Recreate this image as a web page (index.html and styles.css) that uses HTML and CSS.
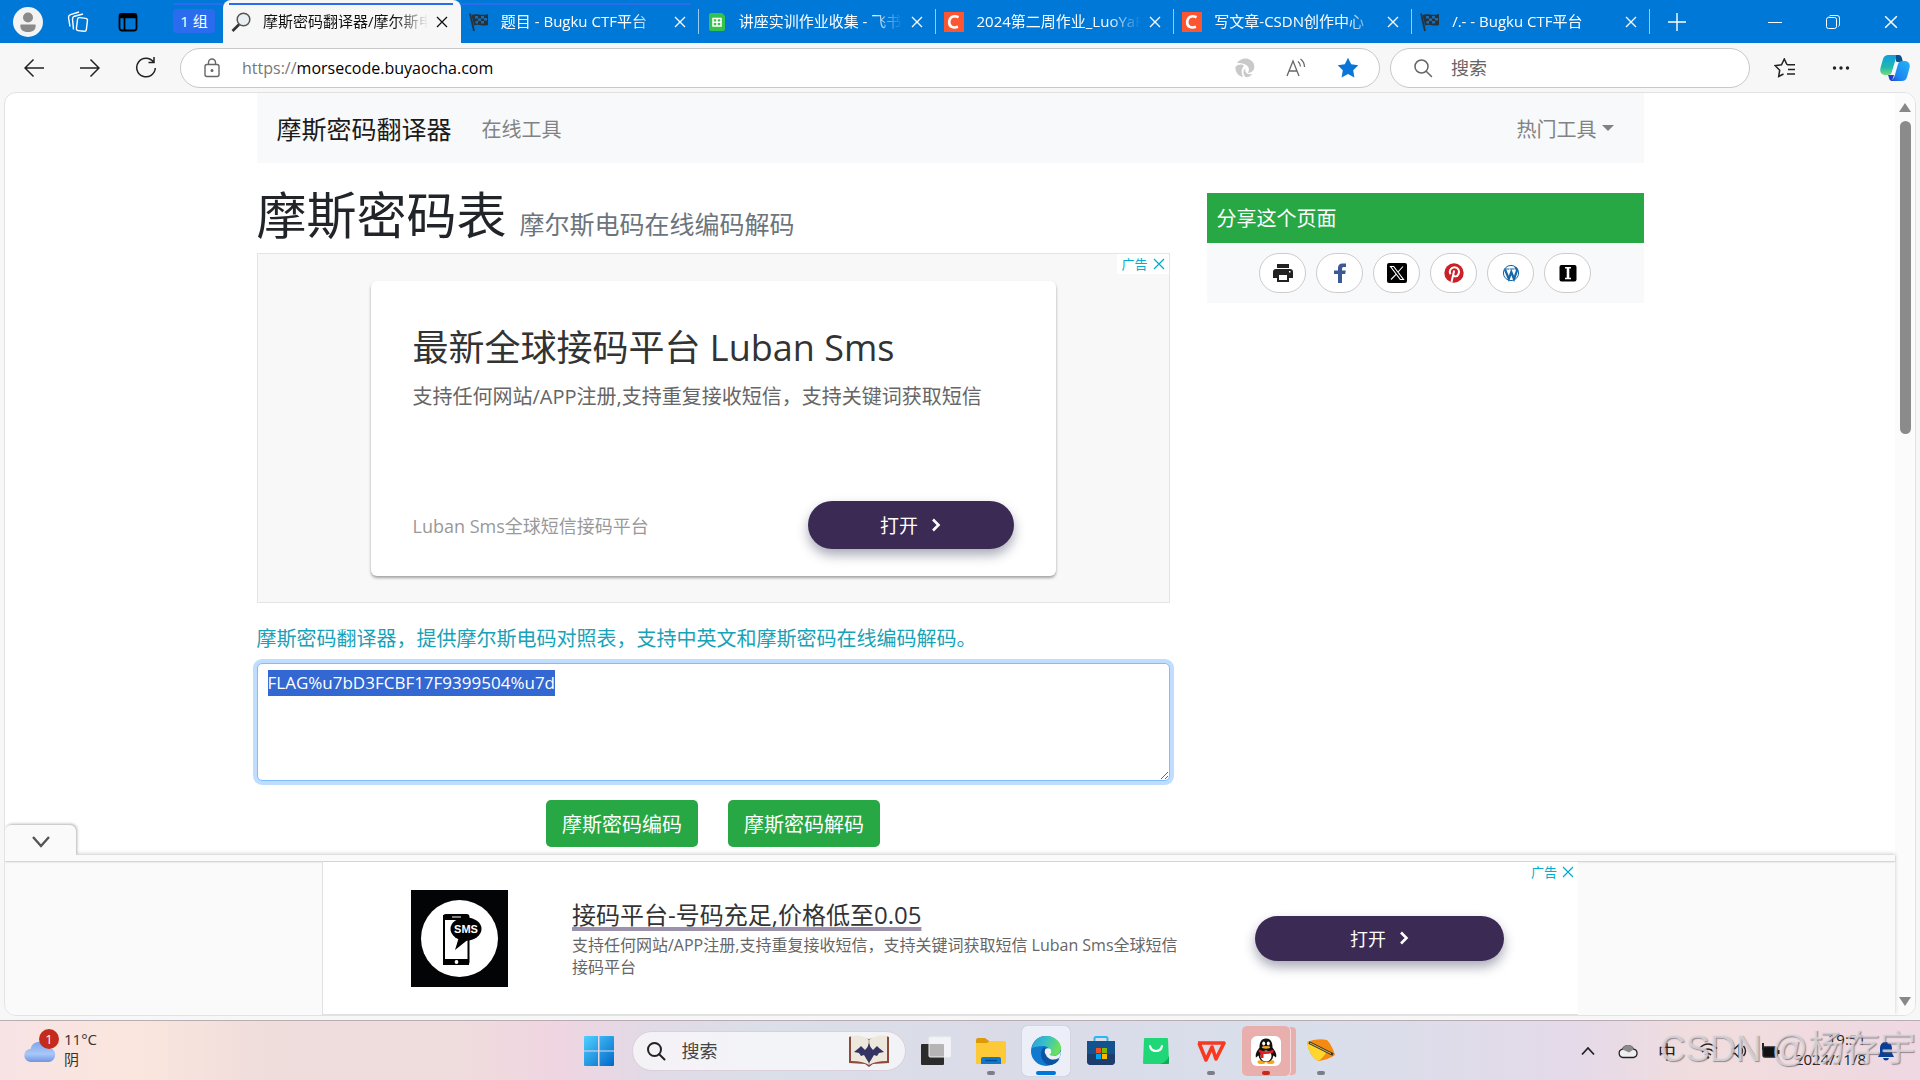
FILE: index.html
```html
<!DOCTYPE html>
<html lang="zh-CN">
<head>
    <meta charset="UTF-8">
    <meta name="viewport" content="width=device-width, initial-scale=1.0">
    <title>摩斯密码翻译器</title>
    <link rel="stylesheet" href="styles.css">
</head>
<body>
    <svg class="defs" aria-hidden="true">
        <defs>
            <symbol id="close" viewBox="0 0 12 12"><path d="M1 1l10 10M11 1L1 11" fill="none" stroke="currentColor" stroke-width="1.3"/></symbol>
            <symbol id="flag" viewBox="0 0 20 20">
                <path d="M1 1.500L5 19" stroke="#26323c" stroke-width="1.800"/>
                <path d="M2.500 3c5-2.500 9 1.500 16.500-1v11c-6 2-9-2-14 .5z" fill="#26323c"/>
                <path d="M6 4h3v2.500H6zM12 4h3v2.500h-3zM9 6.500h3V9H9zM15 6h3v2.500h-3zM6.500 9H9v2.500H6.500zM12 9h3v2.500h-3z" fill="#1c6db0"/>
            </symbol>
            <symbol id="csdn" viewBox="0 0 20 20"><path d="M0 0h20v20H0z" fill="#fc5531"/><path d="M14.500 5.200C9.500 3 5.500 5 5.200 10c-.2 5 4 6.500 8.800 4.800" fill="none" stroke="#fff" stroke-width="2.600"/></symbol>
            <symbol id="loupe" viewBox="0 0 20 20"><circle cx="8.500" cy="8.500" r="6.500" fill="none" stroke="currentColor"/><path d="M13.200 13.200l5.300 5.300" stroke="currentColor" stroke-linecap="round"/></symbol>
            <symbol id="chevron" viewBox="0 0 10 14"><path d="M2 1.500L7.500 7 2 12.500" fill="none" stroke="#fff" stroke-width="2.600"/></symbol>
        </defs>
    </svg>

    <header class="tabbar">
        <div class="tab-tools">
            <button class="tool" aria-label="个人资料"><svg width="30" height="30" viewBox="0 0 30 30"><circle cx="15" cy="15" r="15" fill="#f3f3f3"/><circle cx="15" cy="10.500" r="5" fill="#8a8a8a"/><path d="M7.500 17.500h15c1 5-2.500 7.500-7.500 7.500s-8.500-2.500-7.500-7.500z" fill="#8a8a8a"/></svg></button>
            <button class="tool" aria-label="工作区"><svg width="24" height="24" viewBox="0 0 24 24" fill="none" stroke="#fff" stroke-width="1.400"><rect x="11" y="8" width="10" height="13" rx="2" transform="rotate(7 16 14)"/><path d="M7.500 19.500L6.500 9q0-2 2-2.800L17 4M4 16.500L2.500 7.500q0-2 2-2.800L13 2"/></svg></button>
            <button class="tool" aria-label="标签页"><svg width="20" height="20" viewBox="0 0 20 20" fill="none" stroke="#000" stroke-width="1.800"><rect x="1.500" y="2" width="17" height="16.500" rx="2.500"/><path d="M6.500 6v12"/><path d="M1.500 4h17" stroke-width="4.500"/></svg></button>
        </div>
        <div class="tab-group"><button class="group-name">1 组</button></div>
        <div class="tabs">
            <div class="tab grouped active">
                <svg class="favicon" viewBox="0 0 20 20"><circle cx="12.500" cy="7.500" r="6.300" fill="#e9eff2" stroke="#555" stroke-width="1.500"/><path d="M8 12.500L1.500 19" stroke="#333" stroke-width="2.600"/></svg>
                <span class="tab-title">摩斯密码翻译器/摩尔斯电</span>
                <button class="tab-close" aria-label="关闭"><svg><use href="#close"/></svg></button>
            </div>
            <div class="tab grouped">
                <svg class="favicon"><use href="#flag"/></svg>
                <span class="tab-title">题目 - Bugku CTF平台</span>
                <button class="tab-close" aria-label="关闭"><svg><use href="#close"/></svg></button>
            </div>
            <div class="tab">
                <svg class="favicon" viewBox="0 0 20 20"><path d="M2 3q0-2 2-2h11l3 3v13q0 2-2 2H4q-2 0-2-2z" fill="#34c24c"/><path d="M6 6.500h8v7.500H6zM10 6.500V14M6 10.200h8" fill="none" stroke="#fff" stroke-width="1.500"/></svg>
                <span class="tab-title">讲座实训作业收集 - 飞书</span>
                <button class="tab-close" aria-label="关闭"><svg><use href="#close"/></svg></button>
            </div>
            <div class="tab">
                <svg class="favicon"><use href="#csdn"/></svg>
                <span class="tab-title">2024第二周作业_LuoYaF</span>
                <button class="tab-close" aria-label="关闭"><svg><use href="#close"/></svg></button>
            </div>
            <div class="tab">
                <svg class="favicon"><use href="#csdn"/></svg>
                <span class="tab-title">写文章-CSDN创作中心</span>
                <button class="tab-close" aria-label="关闭"><svg><use href="#close"/></svg></button>
            </div>
            <div class="tab">
                <svg class="favicon"><use href="#flag"/></svg>
                <span class="tab-title">/.- - Bugku CTF平台</span>
                <button class="tab-close" aria-label="关闭"><svg><use href="#close"/></svg></button>
            </div>
        </div>
        <button class="new-tab" aria-label="新建标签页"><svg width="18" height="18" viewBox="0 0 18 18"><path d="M9 0v18M0 9h18" stroke="#fff" stroke-width="1.400"/></svg></button>
        <div class="window-buttons">
            <button aria-label="最小化"><svg width="14" height="14" viewBox="0 0 14 14"><path d="M0 7.500h14" stroke="#fff"/></svg></button>
            <button aria-label="还原"><svg width="14" height="14" viewBox="0 0 14 14" fill="none" stroke="#fff"><rect x=".5" y="2.500" width="10" height="11" rx="2"/><path d="M3 1.500q.5-1 2-1h6q2.500 0 2.500 2.500v6q0 2-1 2.500"/></svg></button>
            <button aria-label="关闭窗口"><svg width="14" height="14"><use href="#close"/></svg></button>
        </div>
    </header>

    <div class="toolbar">
        <button class="nav-btn" aria-label="后退"><svg width="20" height="20" viewBox="0 0 20 20"><path d="M20 10H1M9.500 1.500L1 10l8.500 8.500"/></svg></button>
        <button class="nav-btn" aria-label="前进"><svg width="20" height="20" viewBox="0 0 20 20"><path d="M0 10h19M10.500 1.500L19 10l-8.500 8.500"/></svg></button>
        <button class="nav-btn" aria-label="刷新"><svg width="22" height="22" viewBox="0 0 22 22"><path d="M18.500 5A9.300 9.300 0 1 0 20.300 11M19 0v5.500h-5.500"/></svg></button>
        <div class="address">
            <svg width="18" height="20" viewBox="0 0 18 20" fill="none" stroke="#666" stroke-width="1.400"><rect x="2" y="6.500" width="14" height="12" rx="2"/><path d="M5.500 6.500V4.500a3.500 3.500 0 0 1 7 0v2"/><circle cx="9" cy="12.500" r=".8" fill="#444"/></svg>
            <p class="url"><span>https://</span>morsecode.buyaocha.com</p>
            <button aria-label="扩展"><svg width="20" height="20" viewBox="0 0 20 20" fill="#c9c9c9"><path d="M2 5C6-1 15-1 18.500 5c2.500 6-1 9.500-5.500 10 1.500-3 1-5.500-.5-7S7 4.500 2 5zM.5 9C3 6 7 6 9 8c-3 3-3 7-1 11-5-1-8-5-7.500-10zM10.500 10c-1.500 5 2.500 7 7 6-2 2.500-4.500 3.500-7 3-3-3-2.500-7 0-9z"/></svg></button>
            <button aria-label="大声朗读"><svg width="20" height="20" viewBox="0 0 20 20" fill="none" stroke="#666" stroke-width="1.300"><path d="M1 18L7 3l6 15M3 13h8M12 3.500q2.500 2 2.500 5M14.500 1q4 3 4 8"/></svg></button>
            <button aria-label="收藏"><svg width="22" height="22" viewBox="0 0 22 22"><path d="M11 .8l3.200 6.500 7.100 1-5.100 5 1.200 7.200-6.400-3.400-6.400 3.400 1.200-7.200-5.100-5 7.100-1z" fill="#0a75d8"/></svg></button>
        </div>
        <label class="side-search">
            <svg class="loupe" width="20" height="20"><use href="#loupe"/></svg>
            <input type="text" placeholder="搜索" aria-label="搜索">
        </label>
        <div class="toolbar-end">
            <button class="nav-btn" aria-label="收藏夹"><svg width="22" height="20" viewBox="0 0 22 20"><path d="M13 6.800L10.300 1 7.500 6.800l-6.300.9 4.500 4.500-1 6.300 4.800-2.500M13 6.800h8M14 11.500h7M13 16h8"/></svg></button>
            <button class="nav-btn" aria-label="更多"><svg width="18" height="6" viewBox="0 0 18 6" class="dots"><circle cx="2.500" cy="3" r="1.700"/><circle cx="9" cy="3" r="1.700"/><circle cx="15.500" cy="3" r="1.700"/></svg></button>
            <button class="copilot" aria-label="Copilot"><svg width="30" height="28" viewBox="0 0 30 28">
                <defs>
                    <linearGradient id="cp1" x1="0" y1="0" x2="0" y2="1"><stop offset="0" stop-color="#0e9ee0"/><stop offset=".6" stop-color="#1fb8ae"/><stop offset="1" stop-color="#6fdc7c"/></linearGradient>
                    <linearGradient id="cp2" x1="1" y1="0" x2="0" y2="1"><stop offset="0" stop-color="#25b5f5"/><stop offset=".7" stop-color="#1a86f0"/><stop offset="1" stop-color="#2a3fd0"/></linearGradient>
                </defs>
                <path d="M8 1h11c-3 2-4 6-5 10l-2 7c-1 3-3 3-6 3-5 0-7-3-5-9l2-7c1-3 3-4 5-4z" fill="url(#cp1)"/>
                <path d="M16 1h3c3 0 3 4 4 7h-7z" fill="#0b4f8c"/>
                <path d="M22 27H11c3-2 4-6 5-10l2-7c1-3 3-3 6-3 5 0 7 3 5 9l-2 7c-1 3-3 4-5 4z" fill="url(#cp2)"/>
                <path d="M8 21h6l-2 6c-3 0-3-4-4-6z" fill="#1d3fcf"/>
                <path d="M17.500 8.500q-1.500 1-2 3l-2.500 8" fill="none" stroke="#f2fafd" stroke-width="3"/>
            </svg></button>
        </div>
    </div>

    <div class="viewport">
        <div class="page">
            <div class="scroll-area">
                <div class="container">
                    <nav class="navbar">
                        <a class="brand" href="#">摩斯密码翻译器</a>
                        <a class="nav-link" href="#">在线工具</a>
                        <a class="nav-link dropdown" href="#">热门工具</a>
                    </nav>
                    <div class="row">
                        <main>
                            <h1>摩斯密码表 <small>摩尔斯电码在线编码解码</small></h1>
                            <div class="ad">
                                <p class="ad-label">广告 <svg width="12" height="12"><use href="#close"/></svg></p>
                                <div class="ad-card">
                                    <h2>最新全球接码平台 Luban Sms</h2>
                                    <p class="ad-desc">支持任何网站/APP注册,支持重复接收短信，支持关键词获取短信</p>
                                    <div class="ad-foot">
                                        <span>Luban Sms全球短信接码平台</span>
                                        <a class="open-btn" href="#">打开 <svg width="10" height="14"><use href="#chevron"/></svg></a>
                                    </div>
                                </div>
                            </div>
                            <label class="intro" for="content">摩斯密码翻译器，提供摩尔斯电码对照表，支持中英文和摩斯密码在线编码解码。</label>
                            <textarea id="content" spellcheck="false">FLAG%u7bD3FCBF17F9399504%u7d</textarea>
                            <div class="actions">
                                <button class="btn">摩斯密码编码</button>
                                <button class="btn">摩斯密码解码</button>
                            </div>
                        </main>
                        <aside>
                            <h3>分享这个页面</h3>
                            <div class="share">
                                <a href="#" aria-label="打印"><svg viewBox="0 0 20 20" fill="#222"><path d="M4 1h12v4H4zM3 6h14q3 0 3 3v6h-4v4H4v-4H0V9q0-3 3-3z"/><path d="M6 12h8v5H6zM16 8h1.500v1.500H16z" fill="#fff"/></svg></a>
                                <a href="#" aria-label="Facebook"><svg viewBox="0 0 20 20"><path d="M8 20v-9H4V7.500h4V5q0-4.500 4.500-4.500H16V4h-2.500Q12 4 12 5.500v2h3.800l-.6 3.500H12v9z" fill="#3b5998"/></svg></a>
                                <a href="#" aria-label="X"><svg viewBox="0 0 20 20"><rect width="20" height="20" rx="2"/><path d="M3.500 3.500h3.200l9.800 13h-3.200zM16 3.500L11 9M9 11.300L4 16.500" fill="none" stroke="#fff" stroke-width="1.100"/></svg></a>
                                <a href="#" aria-label="Pinterest"><svg viewBox="0 0 20 20"><circle cx="10" cy="10" r="9.700" fill="#cb2027"/><path d="M6.500 11.200C4.500 8 7 4.300 10.500 4.300c4 0 5.300 3.500 4 6.700-1.200 3-4.500 3-5 1M10.200 7.500L7.500 19" fill="none" stroke="#fff" stroke-width="2"/></svg></a>
                                <a href="#" aria-label="WordPress"><svg viewBox="0 0 20 20"><circle cx="10" cy="10" r="7.600" fill="#fff" stroke="#1468a8" stroke-width="1"/><path d="M4 6.500l3.800 9.500 2.500-7L13 16l3-8.500c0-2-1.500-2-1.500-3.500" fill="none" stroke="#1468a8" stroke-width="2.200"/><path d="M3.500 6h5M9 6h4.500" stroke="#1468a8" stroke-width="1.200"/></svg></a>
                                <a href="#" aria-label="Instapaper"><svg viewBox="0 0 20 20"><rect x="1.500" y="2" width="17" height="16.500" rx="2"/><path d="M7 4.800h6M7 15.500h6" stroke="#fff" stroke-width="1.400"/><path d="M10 5v10" stroke="#fff" stroke-width="2.600"/></svg></a>
                            </div>
                        </aside>
                    </div>
                </div>
            </div>
            <div class="anchor">
                <button class="anchor-toggle" aria-label="收起"><svg width="18" height="12" viewBox="0 0 18 12"><path d="M1 1l8 9 8-9" fill="none" stroke="#555" stroke-width="2.400"/></svg></button>
                <div class="anchor-ad">
                    <p class="ad-label">广告 <svg width="12" height="12"><use href="#close"/></svg></p>
                    <svg class="sms" viewBox="0 0 97 97">
                        <path d="M0 0h97v97H0z" fill="#030405"/>
                        <circle cx="48.500" cy="48.500" r="38.500" fill="#fff"/>
                        <rect x="33" y="25" width="24.500" height="49" rx="2" fill="#fff" stroke="#000" stroke-width="2"/>
                        <path d="M32 25h26v5H32zM32 69h26v6H32z"/><path d="M41 27h9" stroke="#fff"/><circle cx="45.500" cy="72" r="1.900" fill="#fff"/>
                        <ellipse cx="55" cy="39" rx="15.500" ry="11.500"/><path d="M48 47l-4 13 15-12z"/>
                        <text x="55" y="43">SMS</text>
                    </svg>
                    <div class="anchor-text">
                        <h2><a href="#">接码平台-号码充足,价格低至0.05</a></h2>
                        <p>支持任何网站/APP注册,支持重复接收短信，支持关键词获取短信 Luban Sms全球短信接码平台</p>
                    </div>
                    <a class="open-btn wide" href="#">打开 <svg width="10" height="14"><use href="#chevron"/></svg></a>
                </div>
            </div>
        </div>
        <div class="scrollbar"><i class="arrow up"></i><i class="thumb"></i><i class="arrow down"></i></div>
    </div>

    <footer class="taskbar">
        <div class="weather">
            <svg width="36" height="40" viewBox="0 0 36 40">
                <defs><linearGradient id="cl" x1="0" y1="0" x2="0" y2="1"><stop offset="0" stop-color="#7da4ea"/><stop offset=".6" stop-color="#a9c8f8"/><stop offset="1" stop-color="#6f95e2"/></linearGradient></defs>
                <path d="M7 33a6.500 6.500 0 0 1-.5-13 9.500 9.500 0 0 1 18-1.500A7.300 7.300 0 0 1 25 33z" fill="url(#cl)"/>
                <circle cx="25" cy="10" r="10" fill="#c42b1c"/><text x="25" y="15">1</text>
            </svg>
            <p>11°C<br>阴</p>
        </div>
        <div class="apps">
            <button class="app start" aria-label="开始"><svg width="30" height="30" viewBox="0 0 30 30"><defs><linearGradient id="win" x1="0" y1="0" x2="1" y2="1"><stop offset="0" stop-color="#4fd0ff"/><stop offset="1" stop-color="#0067c8"/></linearGradient></defs><path d="M0 1q0-1 1-1h13v14.500H0zM15.500 0H29q1 0 1 1v13.500H15.500zM0 15.500h14V30H1q-1 0-1-1zM15.500 15.500H30V29q0 1-1 1H15.500z" fill="url(#win)"/></svg></button>
            <label class="task-search">
                <svg class="loupe" width="20" height="20"><use href="#loupe"/></svg>
                <input type="text" placeholder="搜索" aria-label="任务栏搜索">
                <svg width="40" height="32" viewBox="0 0 40 32"><path d="M0 2l3-1 17 3 17-3 3 1v26l-16 1-4 3-4-3-16-1z" fill="#8d4a3c"/><path d="M2 1q11-2 18 4Q27-1 38 1v25q-12 0-18 4-6-4-18-4z" fill="#eee8dc"/><path d="M20 5v25" stroke="#a89e8c"/><path d="M20 8l1.500 4L24 15l4-4 2 2 5 4-5 1-2 3-3-1-3 5-2 3-2-3-3-5-3 1-2-3-5-1 5-4 2-2 4 4 2.500-3z" fill="#343463"/></svg>
            </label>
            <button class="app" aria-label="任务视图"><svg width="30" height="30" viewBox="0 0 30 30"><rect y="8" width="23" height="21" rx="1" fill="#2b2b2b"/><rect x="8" y="1" width="22" height="20" rx="1" fill="#fff" fill-opacity=".65" stroke="#eee"/></svg></button>
            <button class="app running" aria-label="文件资源管理器"><svg width="30" height="30" viewBox="0 0 30 30"><path d="M0 4q0-2 2-2h7l4 3v5H0z" fill="#dd9a08"/><path d="M0 7h11l3-2h14q2 0 2 2v19q0 2-2 2H0z" fill="#fdc936"/><path d="M5 28v-5q0-2 2-2h16q2 0 2 2v5z" fill="#0f78cc"/><path d="M9 24.500h12" stroke="#084c90" stroke-width="1.400"/></svg></button>
            <button class="app running current" aria-label="Microsoft Edge"><svg width="30" height="30" viewBox="0 0 30 30"><defs><linearGradient id="e1" x1="0" y1="0" x2="1" y2=".3"><stop offset="0" stop-color="#2a9de0"/><stop offset=".5" stop-color="#36c0c8"/><stop offset="1" stop-color="#6ce05c"/></linearGradient></defs><circle cx="15" cy="15" r="15" fill="#1279d0"/><path d="M1 12C2 4 8 0 15 0c9 0 15 6 15 12 0 7-7 9-11 7-2-1 0-2 0-4 0-3-3-5-7-5-5 0-9 1-11 2z" fill="url(#e1)"/><path d="M13 11c-4 3-5 13 4 18 5 .5 9-2 11.500-6-5 2-9 1-12-2s-4-6-1.500-8z" fill="#0c54a0"/><path d="M15 13q-2 7 4 10 5 1.500 9.500-1.500l2-7c-3 6-9 6-11.500 4.500z" fill="#eef0f6"/><circle cx="17" cy="15.500" r="3.200" fill="#eef0f6"/></svg></button>
            <button class="app" aria-label="Microsoft Store"><svg width="30" height="30" viewBox="0 0 30 30"><path d="M8.500 6V2.500q0-1.500 1.500-1.500h10q1.500 0 1.500 1.500V6" fill="none" stroke="#2bb8f2" stroke-width="2"/><path d="M1 5h28v20q0 4-4 4H5q-4 0-4-4z" fill="#13518f"/><path d="M1 18h28v7q0 4-4 4H5q-4 0-4-4z" fill="#1d3e6d"/><path d="M10 12h5v5h-5z" fill="#f25022"/><path d="M16 12h5v5h-5z" fill="#7fba00"/><path d="M10 18h5v5h-5z" fill="#00a4ef"/><path d="M16 18h5v5h-5z" fill="#ffb900"/></svg></button>
            <button class="app" aria-label="应用商店"><svg width="30" height="30" viewBox="0 0 30 30"><path d="M4 2h22q1 0 1 1l1 24q0 1-1 1H3q-1 0-1-1L3 3q0-1 1-1z" fill="#1fd777"/><path d="M28 20v7q0 1-1 1h-8q7-2 9-8z" fill="#12a95a"/><path d="M9 10q1 5 6 5t6-5" fill="none" stroke="#fff" stroke-width="2.200" stroke-linecap="round"/></svg></button>
            <button class="app running" aria-label="WPS"><svg width="30" height="30" viewBox="0 0 30 30"><path d="M2 7h15M3 7l7 17 6-13 4 12 8-16H17" fill="none" stroke="#f6391f" stroke-width="3.600" stroke-linejoin="round"/></svg></button>
            <button class="app running alert" aria-label="QQ"><svg width="30" height="30" viewBox="0 0 30 30"><rect width="30" height="30" rx="6" fill="#fff"/><ellipse cx="10.500" cy="26" rx="4" ry="2" fill="#f5a81c"/><ellipse cx="19.500" cy="26" rx="4" ry="2" fill="#f5a81c"/><path d="M15 2.500c-5 0-6.500 4-6.500 9-3 4-4.500 7-3.500 10l2.500-2q1 6.500 7.500 6.500t7.500-6.500l2.500 2c1-3-.5-6-3.500-10 0-5-1.500-9-6.500-9z" fill="#111"/><ellipse cx="15" cy="20" rx="5.500" ry="5.500" fill="#fff"/><path d="M7.500 13.500q7.500 3.500 15 0v3q-5 2-10 1.500v4H9.500v-5q-2-1-2-3.500z" fill="#e02020"/><ellipse cx="12.700" cy="7.500" rx="1.500" ry="2" fill="#fff"/><ellipse cx="17.300" cy="7.500" rx="1.500" ry="2" fill="#fff"/><ellipse cx="15" cy="11.300" rx="4.200" ry="1.400" fill="#f5a81c"/></svg></button>
            <button class="app running" aria-label="编辑器"><svg width="30" height="30" viewBox="0 0 30 30"><path d="M1 6Q10 2 21 4q5 5 8 15-7 5-17 6Q3 20 1 6z" fill="#f58a12"/><path d="M1 6q9 2 19 11-4 6-8 8Q3 20 1 6z" fill="#ffd52e"/><path d="M3 6.500l24 12" stroke="#333" stroke-width="2.600"/><path d="M4 7l21 10.500" stroke="#e0c23c" stroke-width="1"/></svg></button>
        </div>
        <div class="tray">
            <svg width="14" height="10" viewBox="0 0 14 10"><path d="M1 8.500L7 2l6 6.500" fill="none" stroke="#222" stroke-width="1.800"/></svg>
            <svg width="20" height="16" viewBox="0 0 20 16"><path d="M5 14.500a4.200 4.200 0 0 1-.5-8.300 6 6 0 0 1 11 0 4.200 4.200 0 0 1 0 8.300z" fill="#eee" stroke="#222" stroke-width="1.300"/><path d="M4.500 6.500a5.600 5.600 0 0 1 11 0L11 9.500z" fill="#8a8a8a"/></svg>
            <span class="ime">中</span>
            <svg width="20" height="18" viewBox="0 0 20 18" fill="none" stroke="#222" stroke-width="1.500"><path d="M1 6.500q9-9 18 0M4 10q6-6 12 0M7 13q3-3 6 0"/><circle cx="10" cy="15.500" r="1.300" fill="#222" stroke="none"/></svg>
            <svg width="16" height="16" viewBox="0 0 16 16" fill="none" stroke="#222" stroke-width="1.400"><path d="M1 5.500h3L8 1.500v13l-4-4H1zM10.500 5q2 3 0 6M12.500 3q4 5 0 10"/></svg>
            <svg width="20" height="16" viewBox="0 0 20 16"><rect x="3" y="4" width="14" height="10" rx="2" fill="#111" stroke="#222" stroke-width="1.400"/><path d="M18.500 7v4M3 0v7" stroke="#222" stroke-width="2"/></svg>
            <p class="clock">19:51<br>2024/11/8</p>
            <svg width="18" height="20" viewBox="0 0 18 20"><path d="M9 1c-4.500 0-6 3-6 7v4l-2 4h16l-2-4V8c0-4-1.500-7-6-7zM6 17h6q-.5 2.500-3 2.500T6 17z" fill="#0a3f96"/></svg>
        </div>
        <p class="watermark">CSDN @杨存宇</p>
    </footer>
    <script src="script.js"></script>
</body>
</html>
```
FILE: styles.css
```css
* {
    box-sizing: border-box;
}
body {
    margin: 0;
    height: 100vh;
    display: flex;
    flex-direction: column;
    overflow: hidden;
    background: #f7f7f7;
    color: #212529;
    font-family: "Open Sans", "Noto Sans CJK SC", sans-serif;
    font-size: 20px;
}
h1, h2, h3, p {
    margin: 0;
    font-weight: 400;
}
button, input, textarea {
    font: inherit;
}
button {
    padding: 0;
    border: 0;
    background: none;
    color: inherit;
}
a {
    color: inherit;
    text-decoration: none;
}
svg {
    display: block;
    flex: none;
}
.defs {
    position: absolute;
    width: 0;
    height: 0;
}
.loupe {
    stroke-width: 1.5;
}

/* tab strip */
.tabbar {
    flex: none;
    display: flex;
    height: 43px;
    background: #0078d7;
    color: #fff;
    font-size: 15px;
}
.tab-tools {
    display: flex;
    padding-left: 3px;
}
.tool {
    display: grid;
    place-items: center;
    width: 50px;
}
.tab-group {
    margin-left: 20px;
    width: 50px;
    padding-top: 3px;
}
.tab-group::before,
.grouped::before {
    content: "";
    display: block;
    height: 2px;
    background: #2b6cee;
}
.group-name {
    width: 42px;
    height: 24px;
    margin-top: 4px;
    border-radius: 4px;
    background: #2b6cee;
    line-height: 24px;
}
.tabs {
    flex: 0 1 1427px;
    display: flex;
    min-width: 0;
}
.tab {
    position: relative;
    flex: 1;
    min-width: 0;
    display: flex;
    align-items: center;
    padding: 0 13px 0 8px;
}
.tab + .tab::after {
    content: "";
    position: absolute;
    right: 0;
    top: 9px;
    height: 25px;
    width: 1px;
    background: #9ccbf0;
}
.grouped::before {
    position: absolute;
    top: 3px;
    left: 0;
    right: 8px;
}
.active {
    background: #f7f7f7;
    color: #111;
    border-radius: 8px 8px 0 0;
}
.active::before {
    left: 6px;
}
.favicon {
    width: 20px;
    height: 20px;
    margin-right: 12px;
}
.tab-title {
    flex: 1;
    overflow: hidden;
    padding-bottom: 2px;
    white-space: nowrap;
    line-height: 24px;
    mask-image: linear-gradient(to right, #000 80%, transparent);
}
.tab-close {
    margin-left: 8px;
}
.tab-close svg {
    width: 12px;
    height: 12px;
}
.new-tab {
    width: 54px;
    display: grid;
    place-items: center;
}
.window-buttons {
    display: flex;
    margin-left: auto;
}
.window-buttons button {
    width: 58px;
    display: grid;
    place-items: center;
}

/* address row */
.toolbar {
    flex: none;
    display: flex;
    align-items: center;
    height: 49px;
    padding-left: 6px;
}
.nav-btn {
    width: 56px;
    height: 40px;
    display: grid;
    place-items: center;
}
.nav-btn svg {
    fill: none;
    stroke: #222;
    stroke-width: 1.5;
}
.nav-btn .dots {
    fill: #222;
    stroke: none;
}
.address,
.side-search {
    display: flex;
    align-items: center;
    height: 40px;
    border: 1px solid #c8c8c8;
    border-radius: 20px;
    background: #fff;
    font-size: 16px;
}
.address {
    flex: 1;
    margin-left: 6px;
    gap: 31px;
    padding: 0 20px 0 22px;
    color: #000;
}
.url {
    flex: 1;
    margin-left: -10px;
}
.url span {
    color: #777;
}
.side-search {
    width: 360px;
    margin: 0 7px 0 10px;
    gap: 18px;
    padding-left: 22px;
    color: #666;
}
input {
    flex: 1;
    min-width: 0;
    padding: 0;
    border: 0;
    outline: 0;
    background: none;
    font-size: 18px;
}
input::placeholder {
    color: #666;
    opacity: 1;
}
.toolbar-end {
    display: flex;
    align-items: center;
}
.copilot {
    width: 51px;
    display: grid;
    place-items: center;
}

/* page area */
.viewport {
    flex: 1;
    min-height: 0;
    display: flex;
    margin: 0 4px 4px;
    border: 1px solid #e2e2e2;
    border-radius: 12px;
    overflow: hidden;
    background: #fff;
}
.page {
    flex: 1;
    min-width: 0;
    display: flex;
    flex-direction: column;
}
.scroll-area {
    flex: 1;
    min-height: 0;
    overflow: hidden;
}
.container {
    max-width: 1387px;
    margin: 0 auto;
}
.navbar {
    display: flex;
    align-items: center;
    height: 70px;
    padding: 0 30px 0 20px;
    background: #f8f9fa;
    color: #818283;
}
.brand {
    margin-right: 30px;
    font-size: 25px;
    color: #1b1b1b;
}
.dropdown {
    display: flex;
    align-items: center;
    margin-left: auto;
}
.dropdown::after {
    content: "";
    margin-left: 5px;
    border: 6px solid transparent;
    border-top-color: currentColor;
    border-bottom: 0;
}
.row {
    display: grid;
    grid-template-columns: 913fr 437fr;
    gap: 37px;
    padding-top: 22px;
}
h1 {
    font-size: 50px;
    line-height: 60px;
    margin-bottom: 8px;
}
h1 small {
    font-size: 25px;
    line-height: 30px;
    color: #6c757d;
}
.ad {
    position: relative;
    height: 350px;
    padding: 27px 113px;
    border: 1px solid #e3e3e8;
    background: #f8f8f8;
}
.ad-label {
    position: absolute;
    top: 0;
    right: 0;
    display: flex;
    align-items: center;
    gap: 5px;
    padding: 0 4px;
    background: #fff;
    font-size: 13px;
    line-height: 20px;
    color: #00aecd;
}
.ad-card {
    display: flex;
    flex-direction: column;
    height: 295px;
    padding: 40px 42px 27px;
    border-radius: 6px;
    background: #fff;
    box-shadow: 0 2px 3px rgba(0, 0, 0, .35);
}
.ad-card h2 {
    font-size: 36px;
    line-height: 54px;
    color: #333;
}
.ad-desc {
    margin-top: 7px;
    line-height: 30px;
    color: #666;
}
.ad-foot {
    display: flex;
    align-items: center;
    justify-content: space-between;
    margin-top: auto;
    font-size: 18px;
    color: #999;
}
.open-btn {
    display: flex;
    align-items: center;
    justify-content: center;
    gap: 13px;
    width: 206px;
    height: 48px;
    border-radius: 24px;
    background: #3b2a54;
    box-shadow: 0 6px 12px rgba(40, 45, 75, .4);
    font-size: 19px;
    color: #fff;
}
.wide {
    width: 249px;
    height: 45px;
    font-size: 18px;
}
.intro {
    display: block;
    margin: 21px 0 9px;
    line-height: 30px;
    color: #17a2b8;
}
textarea {
    display: block;
    width: 100%;
    height: 118px;
    padding: 6px 10px;
    border: 1px solid #80bdff;
    border-radius: 5px;
    outline: 0;
    box-shadow: 0 0 0 4px #bfdeff;
    font-size: 17px;
    line-height: 26px;
    color: #495057;
}
textarea::selection {
    background: #3367d1;
    color: #fff;
}
.actions {
    display: flex;
    justify-content: center;
    gap: 30px;
    margin-top: 19px;
}
.btn {
    height: 47px;
    padding: 0 16px;
    border-radius: 5px;
    background: #28a745;
    color: #fff;
}
aside {
    padding-top: 8px;
}
h3 {
    padding: 2px 10px 0;
    background: #28a745;
    font-size: 20px;
    line-height: 48px;
    color: #fff;
}
.share {
    display: flex;
    justify-content: center;
    gap: 10px;
    padding: 10px;
    background: #f8f9fa;
}
.share a {
    display: grid;
    place-items: center;
    width: 47px;
    height: 40px;
    border: 1px solid #ccc;
    border-radius: 20px;
    background: #fff;
}
.share svg {
    width: 20px;
    height: 20px;
}

/* bottom ad */
.anchor {
    position: relative;
    flex: none;
    background: #fafafa;
    box-shadow: 0 -1px 4px rgba(0, 0, 0, .2);
}
.anchor::before {
    content: "";
    display: block;
    height: 6px;
    box-shadow: 0 1px 2px rgba(0, 0, 0, .2);
}
.anchor-toggle {
    position: absolute;
    left: 0;
    bottom: 100%;
    width: 71px;
    height: 30px;
    padding-top: 4px;
    display: grid;
    place-items: center;
    border-radius: 6px 6px 0 0;
    background: #fafafa;
    box-shadow: 1px -1px 3px rgba(0, 0, 0, .3);
    clip-path: inset(-4px -4px 0 0);
}
.anchor-ad {
    position: relative;
    display: flex;
    align-items: center;
    max-width: 1256px;
    height: 154px;
    margin: 0 auto;
    padding: 0 74px 0 88px;
    border: 1px solid #e0e0e0;
    border-top-color: #d3d3d8;
    border-right: 0;
    background: #fff;
}
.sms {
    width: 97px;
    height: 97px;
    margin-right: 64px;
}
.sms text {
    fill: #fff;
    font: bold 11px "Liberation Sans", sans-serif;
    text-anchor: middle;
}
.anchor-text {
    flex: 1;
    margin-right: 65px;
    font-size: 16px;
    line-height: 22px;
    color: #666;
}
.anchor-text h2 {
    margin-bottom: 2px;
    font-size: 24px;
    line-height: 34px;
    color: #333;
}
.anchor-text h2 a {
    text-decoration: underline 4px #9d92ab;
    text-underline-offset: 3px;
    text-decoration-skip-ink: none;
}

.scrollbar {
    flex: none;
    display: flex;
    flex-direction: column;
    align-items: center;
    width: 20px;
    padding: 10px 0 9px;
    background: #fbfbfb;
}
.arrow {
    border: 6px solid transparent;
}
.up {
    border-top: 0;
    border-bottom: 9px solid #888;
}
.down {
    margin-top: auto;
    border-bottom: 0;
    border-top: 9px solid #888;
}
.thumb {
    width: 11px;
    height: 313px;
    margin-top: 9px;
    border-radius: 6px;
    background: #8b8b8b;
}

/* taskbar */
.taskbar {
    position: relative;
    flex: none;
    display: grid;
    grid-template-columns: 1fr auto 1fr;
    align-items: center;
    height: 60px;
    border-top: 1px solid #b9adb3;
    background: linear-gradient(to right, #f7e3e4, #fbe6de 7%, #efdddc 14%, #efdcdd 24%, #efd5e1 29%, #e1dae7 34%, #dadfe8 40%, #dbdbe8 52%, #d8dfeb 68%, #e5dae9 82%, #f1dddd 89%, #efd8e2);
}
.weather {
    display: flex;
    align-items: center;
    gap: 4px;
    padding: 0 0 4px 24px;
    font-size: 15px;
    line-height: 20px;
    color: #333;
}
.weather text {
    fill: #fff;
    font-size: 13px;
    text-anchor: middle;
}
.apps {
    display: flex;
    align-items: center;
    padding-left: 6px;
}
.app {
    position: relative;
    width: 48px;
    height: 50px;
    margin-right: 7px;
    display: grid;
    place-items: center;
    border-radius: 5px;
}
.start {
    margin-right: 9px;
}
.running::after {
    content: "";
    position: absolute;
    bottom: 1px;
    left: 20px;
    width: 8px;
    height: 4px;
    border-radius: 2px;
    background: #7d7d85;
}
.current {
    background: #eceff7;
    box-shadow: 0 0 1px rgba(0, 0, 0, .3);
}
.current::after {
    left: 14px;
    width: 20px;
    background: #0078d7;
}
.alert {
    background: #e9afad;
    box-shadow: 1px 0 0 #f5dcdc, 7px 0 0 -1px #e9afad;
}
.alert::after {
    background: #c42b1c;
}
.task-search {
    display: flex;
    align-items: center;
    gap: 16px;
    width: 274px;
    height: 40px;
    margin-right: 6px;
    padding: 0 16px 0 13px;
    border: 1px solid #dccfdc;
    border-radius: 20px;
    background: rgba(255, 255, 255, .65);
    color: #222;
}
.task-search .loupe {
    stroke-width: 2;
}
.task-search input::placeholder {
    color: #444;
}
.tray {
    display: flex;
    align-items: center;
    justify-content: flex-end;
    padding-right: 25px;
    color: #222;
    font-size: 15px;
}
.tray svg {
    margin-left: 13px;
}
.tray svg:nth-child(2) {
    margin: 0 20px 0 23px;
}
.ime {
    width: 18px;
    margin-right: 9px;
    font-size: 18px;
}
.clock {
    width: 86px;
    padding-bottom: 3px;
    line-height: 20px;
    text-align: right;
}
.tray .clock + svg {
    margin-left: 11px;
}
.watermark {
    position: absolute;
    right: 4px;
    top: 0;
    font-family: "Liberation Sans", "Noto Sans CJK SC", sans-serif;
    font-size: 36px;
    line-height: 56px;
    color: rgba(225, 222, 225, .8);
    text-shadow: 1px 1px 1px rgba(110, 100, 110, .7);
}
```
FILE: script.js
```js
// focus the input box and select its text
const content = document.getElementById('content');
content.focus();
content.select();
```
